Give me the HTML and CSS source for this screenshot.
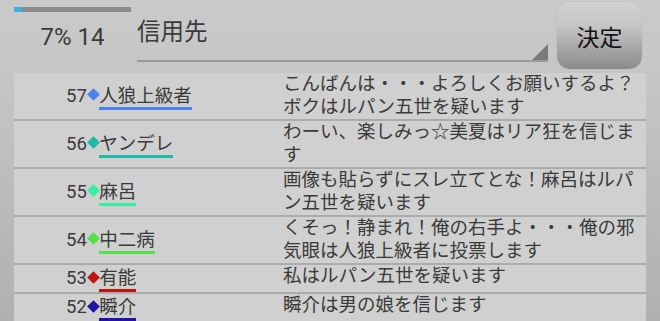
FILE: index.html
```html
<!DOCTYPE html>
<html lang="ja">
<head>
    <meta charset="UTF-8">
    <meta name="viewport" content="width=device-width, initial-scale=1.0">
    <title>投票</title>
    <link rel="stylesheet" href="styles.css">
</head>
<body>
    <div class="header">
        <div class="progress">
            <div class="bar"><div class="bar-fill" style="width: 7%"></div></div>
            <div class="progress-text">7% 14</div>
        </div>
        <div class="target">
            <span class="target-label">信用先</span>
            <span class="corner"></span>
        </div>
        <button class="btn-decide">決定</button>
    </div>

    <div class="log">
        <div class="row">
            <div class="who"><span class="num">57</span><span class="mark blue"></span><span class="name blue">人狼上級者</span></div>
            <div class="msg">こんばんは・・・よろしくお願いするよ？ボクはルパン五世を疑います</div>
        </div>
        <div class="row">
            <div class="who"><span class="num">56</span><span class="mark teal"></span><span class="name teal">ヤンデレ</span></div>
            <div class="msg">わーい、楽しみっ☆美夏はリア狂を信じます</div>
        </div>
        <div class="row">
            <div class="who"><span class="num">55</span><span class="mark mint"></span><span class="name mint">麻呂</span></div>
            <div class="msg">画像も貼らずにスレ立てとな！麻呂はルパン五世を疑います</div>
        </div>
        <div class="row">
            <div class="who"><span class="num">54</span><span class="mark green"></span><span class="name green">中二病</span></div>
            <div class="msg">くそっ！静まれ！俺の右手よ・・・俺の邪気眼は人狼上級者に投票します</div>
        </div>
        <div class="row">
            <div class="who"><span class="num">53</span><span class="mark red"></span><span class="name red">有能</span></div>
            <div class="msg">私はルパン五世を疑います</div>
        </div>
        <div class="row">
            <div class="who"><span class="num">52</span><span class="mark navy"></span><span class="name navy">瞬介</span></div>
            <div class="msg">瞬介は男の娘を信じます</div>
        </div>
    </div>
</body>
</html>
```

FILE: styles.css
```css
html, body {
    height: 100%;
}
body {
    margin: 0;
    overflow: hidden;
    font-family: Roboto, "Noto Sans CJK JP", sans-serif;
    color: #3a3a3a;
    background: linear-gradient(#cacaca, #c4c4c4 30%, #b0b0b0);
}
.header {
    display: flex;
    align-items: flex-start;
    height: 73px;
    padding-left: 14px;
}
.progress {
    width: 117px;
    padding-top: 7px;
}
.bar {
    height: 5px;
    background: #8a8a8a;
}
.bar-fill {
    height: 100%;
    background: #3cb0e2;
}
.progress-text {
    margin-top: 11px;
    font-size: 24px;
    line-height: 28px;
    text-align: center;
}
.target {
    display: flex;
    justify-content: space-between;
    align-items: flex-end;
    box-sizing: border-box;
    width: 411px;
    height: 62px;
    margin-left: 6px;
    padding-top: 18px;
    border-bottom: 2px solid #9a9a9a;
}
.target-label {
    align-self: flex-start;
    font-size: 23.5px;
    line-height: 28px;
}
.corner {
    width: 0;
    height: 0;
    border-left: 16px solid transparent;
    border-bottom: 16px solid #7a7a7a;
}
.btn-decide {
    width: 87px;
    height: 69px;
    margin: 1px 0 0 8px;
    padding: 0;
    border: 1px solid #c2c2c2;
    border-radius: 14px;
    background: linear-gradient(#d2d2d2, #c6c6c6 35%, #8a8a8a);
    font-family: "Noto Sans CJK JP", sans-serif;
    font-size: 23px;
    color: #111;
}
.log {
    margin: 0 14px;
    height: 248px;
    background: #d0d0d0;
    font-size: 18.5px;
}
.row {
    display: grid;
    grid-template-columns: 269px 1fr;
    box-sizing: border-box;
    min-height: 26px;
    border-bottom: 2px solid #ababab;
}
.who {
    display: flex;
    align-items: center;
    padding-left: 52px;
}
.num, .name {
    line-height: 21px;
}
.mark {
    width: 9px;
    height: 9px;
    margin: 0 1.5px 3px 2px;
    transform: rotate(45deg);
}
.name {
    border-bottom: 3px solid;
    color: #3a3a3a;
    margin-top: 3px;
}
.msg {
    line-height: 23px;
    word-break: break-all;
}
.mark.blue { background: #4a80f0; }
.name.blue { border-color: #4a80f0; }
.mark.teal { background: #1fbaa8; }
.name.teal { border-color: #1fbaa8; }
.mark.mint { background: #33f0a3; }
.name.mint { border-color: #33f0a3; }
.mark.green { background: #55e04a; }
.name.green { border-color: #55e04a; }
.mark.red { background: #c01410; }
.name.red { border-color: #c01410; }
.mark.navy { background: #2212a6; }
.name.navy { border-color: #2212a6; }
```
